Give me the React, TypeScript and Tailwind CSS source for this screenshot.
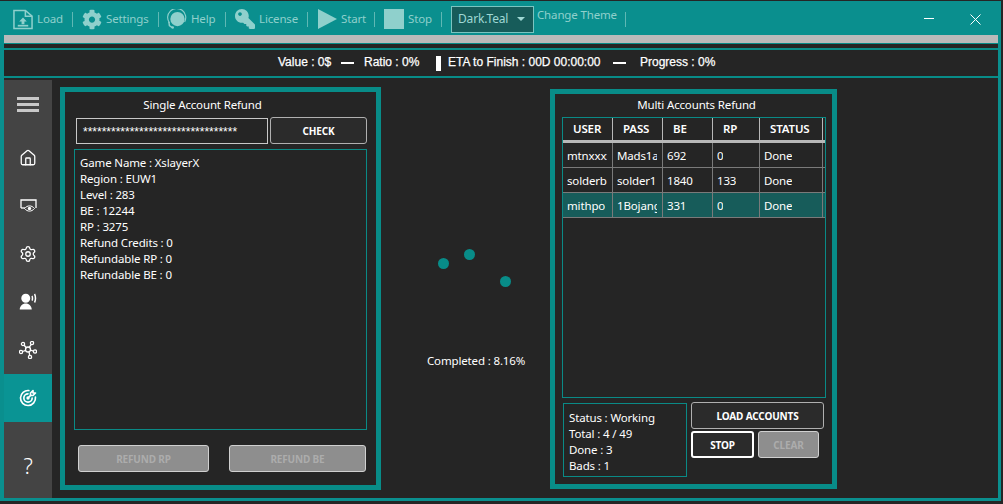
import { Home, Settings } from "lucide-react"
import { FaCog, FaKey } from "react-icons/fa"
import { RiUserVoiceFill } from "react-icons/ri"
import { TbTargetArrow } from "react-icons/tb"

const uiFont = "font-['Noto_Sans','Open_Sans',sans-serif] tracking-[-0.15px]"

const LoadIcon = () => (
  <svg width="21" height="21" viewBox="0 0 21 21" fill="none" stroke="#8fd0cc" strokeWidth="1.6">
    <path d="M1 1h12l7 6v13H1z" />
    <path d="M13 1v6h7" />
    <path d="M10.5 8.5l4 4h-2.500v3h-3v-3h-2.500z" fill="#8fd0cc" stroke="none" />
    <path d="M5 17h11" strokeWidth="1.800" />
  </svg>
)

const HelpIcon = () => (
  <svg width="21" height="21" viewBox="0 0 21 21" fill="none">
    <circle cx="11" cy="10" r="7.500" fill="#8fd0cc" />
    <path d="M2.500 14a9.500 9.500 0 1 1 16 -1" stroke="#8fd0cc" strokeWidth="1.200" />
    <path d="M2 13l.5 4 3 2" stroke="#8fd0cc" strokeWidth="1.500" />
    <circle cx="6" cy="19" r="1.300" fill="#8fd0cc" />
  </svg>
)

const ToolItem = ({ icon, label, width }: { icon: React.ReactNode; label: string; width: number }) => (
  <div className="flex items-center h-full shrink-0" style={{ width }}>
    <div className="w-5 h-5 flex items-center justify-center shrink-0">{icon}</div>
    <span className="ml-1 text-[11.5px] text-[#8fd0cc]">{label}</span>
    <div className="ml-auto w-px h-[15px] bg-[#5fb8b4]" />
  </div>
)

const Toolbar = () => (
  <div className={`${uiFont} h-[34px] flex items-center pt-[2px] pl-[9px] pr-[17px] shrink-0`}>
    <ToolItem icon={<LoadIcon />} label="Load" width={60} />
    <div className="w-[9px]" />
    <ToolItem icon={<FaCog size={21} color="#8fd0cc" />} label="Settings" width={77} />
    <div className="w-[8px]" />
    <ToolItem icon={<HelpIcon />} label="Help" width={59} />
    <div className="w-[9px]" />
    <ToolItem icon={<FaKey size={20} color="#8fd0cc" className="-scale-x-100" />} label="License" width={73} />
    <div className="w-[9px]" />
    <ToolItem
      icon={
        <svg width="20" height="20" viewBox="0 0 20 20">
          <path d="M1 0l19 10L1 20z" fill="#8fd0cc" />
        </svg>
      }
      label="Start"
      width={58}
    />
    <div className="w-[9px]" />
    <ToolItem icon={<div className="w-5 h-5 bg-[#8fd0cc]" />} label="Stop" width={58} />
    <div className="w-[9px]" />
    <div className="w-[83px] h-[27px] bg-[#175c5a] border border-[#7cc4c0] flex items-center pl-[6px] text-[12px] text-[#9fd8d4] shrink-0">
      Dark.Teal
      <span className="ml-auto mr-[8px] w-0 h-0 border-x-[4px] border-x-transparent border-t-[4px] border-t-[#9fd8d4]" />
    </div>
    <span className="ml-[3px] -mt-[8px] text-[11.5px] text-[#8fd0cc] w-[80px] whitespace-nowrap">Change Theme</span>
    <div className="ml-[8px] w-px h-[15px] bg-[#5fb8b4]" />
    <div className="ml-auto w-[10px] h-px bg-white mr-[36px] -mt-px" />
    <svg width="11" height="11" viewBox="0 0 11 11" stroke="#fff" strokeWidth="1">
      <path d="M0.500 0.500l10 10M10.500 0.500l-10 10" />
    </svg>
  </div>
)

const Dash = () => <div className="w-[13px] h-[2px] bg-white" />

const StatsBar = () => (
  <div className="h-[26px] bg-[#252525] flex items-center pl-[274px] pb-[2px] text-[12px] whitespace-nowrap text-white [-webkit-text-stroke:0.25px_white] tracking-normal font-['Liberation_Sans',sans-serif] shrink-0">
    <span className="w-[53px]">Value : 0$</span>
    <div className="ml-[10px] mt-[2px]"><Dash /></div>
    <span className="ml-[10px] w-[54px]">Ratio : 0%</span>
    <div className="ml-[18px] mt-[2px] w-[5px] h-[15px] bg-white" />
    <span className="ml-[7px] w-[152px]">ETA to Finish : 00D 00:00:00</span>
    <div className="ml-[13px] mt-[2px]"><Dash /></div>
    <span className="ml-[14px]">Progress : 0%</span>
  </div>
)

const MonitorEye = () => (
  <svg width="17" height="14" viewBox="0 0 17 14" fill="none" stroke="#fff">
    <path d="M1 9V1h15v8" strokeWidth="1.300" />
    <path d="M1 9h4" strokeWidth="1.300" />
    <path d="M4.500 9.500c3-3.500 7-3.500 10 0c-3 3.500-7 3.500-10 0z" strokeWidth="1" fill="#444" />
    <circle cx="9.500" cy="9.500" r="1.700" fill="#fff" stroke="none" />
  </svg>
)

const NetworkIcon = () => (
  <svg width="18" height="18" viewBox="0 0 18 18" fill="none" stroke="#fff" strokeWidth="1.300">
    <circle cx="9" cy="8.500" r="2.500" />
    <circle cx="4" cy="3" r="1.600" />
    <circle cx="13" cy="2" r="1.600" />
    <circle cx="2" cy="11" r="1.600" />
    <circle cx="16" cy="10.500" r="1.600" />
    <circle cx="11" cy="16" r="1.600" />
    <path d="M5 4l2.500 3M12.300 3.300l-2.300 3.300M3.400 10.500l3.500-1.200M11.200 9l3.300 1.100M10 10.700l.7 3.800" />
  </svg>
)

const SideItem = ({ children, active }: { children: React.ReactNode; active?: boolean }) => (
  <div className={`h-12 flex items-center justify-center ${active ? "bg-[#0a9494]" : ""}`}>{children}</div>
)

const Sidebar = () => (
  <div className="w-12 mt-[2px] bg-[#444444] flex flex-col shrink-0">
    <SideItem>
      <div className="w-[22px] flex flex-col gap-[3px]">
        <div className="h-[3px] bg-[#c8c8c8]" />
        <div className="h-[3px] bg-[#c8c8c8]" />
        <div className="h-[3px] bg-[#c8c8c8]" />
      </div>
    </SideItem>
    <div className="h-[6px]" />
    <SideItem><Home size={18} color="#fff" strokeWidth={1.700} /></SideItem>
    <SideItem><MonitorEye /></SideItem>
    <SideItem><Settings size={18} color="#fff" strokeWidth={1.700} /></SideItem>
    <SideItem><RiUserVoiceFill size={18} color="#fff" /></SideItem>
    <SideItem><NetworkIcon /></SideItem>
    <SideItem active><TbTargetArrow size={20} color="#fff" /></SideItem>
    <div className="mt-auto mb-[9px]">
      <SideItem><span className="text-[22px] font-light text-white">?</span></SideItem>
    </div>
  </div>
)

const info = [
  "Game Name : XslayerX",
  "Region : EUW1",
  "Level : 283",
  "BE : 12244",
  "RP : 3275",
  "Refund Credits : 0",
  "Refundable RP : 0",
  "Refundable BE : 0",
]

const rows = [
  ["mtnxxxx", "Mads1a", "692", "0", "Done"],
  ["solderb", "solder1", "1840", "133", "Done"],
  ["mithpo", "1Bojang", "331", "0", "Done"],
]

const cols = ["w-[50px]", "w-[50px]", "w-[50px]", "w-[47px]", "w-[63px]"]

const DisabledBtn = ({ label, className }: { label: string; className: string }) => (
  <button className={`h-[27px] pt-px rounded-[3px] border border-[#d0d0d0] bg-[#8e8e8e] text-[10px] font-bold text-[#acacac] ${className}`}>
    {label}
  </button>
)

const OutlineBtn = ({ label, className }: { label: string; className: string }) => (
  <button className={`h-[27px] pt-px rounded-[3px] bg-[#2b2b2b] text-[10px] font-bold text-white ${className}`}>{label}</button>
)

const SinglePanel = () => (
  <div className="ml-2 mt-[9px] w-[321px] h-[403px] border-[5px] border-[#088c88] flex flex-col pl-[9px] shrink-0">
    <div className="text-center text-[11.5px] text-white w-[257px] h-[25px] pt-[4px]">Single Account Refund</div>
    <div className="flex gap-[2px] pl-[2px] h-[27px]">
      <div className="w-[192px] h-[26px] mt-px border border-[#c8c8c8] flex items-center pl-[6px] pt-[2px] text-[12px] text-white leading-none tracking-normal overflow-hidden font-['Liberation_Sans',sans-serif]">
        {"*".repeat(33)}
      </div>
      <OutlineBtn label="CHECK" className="w-[97px] border border-[#b0b0b0]" />
    </div>
    <div className="mt-[5px] w-[293px] h-[281px] border border-[#0a8a86] px-[5px] pt-[5px] text-[11.5px] leading-4 text-white">
      {info.map((line) => (
        <div key={line}>{line}</div>
      ))}
    </div>
    <div className="flex mt-[15px] pl-[4px]">
      <DisabledBtn label="REFUND RP" className="w-[131px]" />
      <DisabledBtn label="REFUND BE" className="ml-[20px] w-[137px]" />
    </div>
  </div>
)

const Spinner = () => (
  <div className="relative flex-1 h-full">
    <div className="absolute left-[57px] top-[180px] w-[11px] h-[11px] rounded-full bg-[#088c88]" />
    <div className="absolute left-[83px] top-[171px] w-[11px] h-[11px] rounded-full bg-[#088c88]" />
    <div className="absolute left-[119px] top-[198px] w-[11px] h-[11px] rounded-full bg-[#088c88]" />
    <div className="absolute left-[46px] top-[274px] text-[11.5px] text-white whitespace-nowrap">Completed : 8.16%</div>
  </div>
)

const MultiPanel = () => (
  <div className="mt-[11px] w-[287px] h-[400px] border-[5px] border-[#088c88] flex flex-col pl-[7px] shrink-0">
    <div className="text-center text-[11.5px] text-white w-[269px] h-[23px] pt-[2px]">Multi Accounts Refund</div>
    <div className="w-[264px] h-[281px] border border-[#0a8a86] flex flex-col">
      <div className="flex h-[22px] shrink-0">
        {["USER", "PASS", "BE", "RP", "STATUS"].map((h, i) => (
          <div key={h} className={`${cols[i]} border-r border-[#b8b8b8] pl-[10px] flex items-center text-[11.5px] font-semibold text-white`}>
            {h}
          </div>
        ))}
      </div>
      <div className="h-[3px] w-[262px] bg-[#b8b8b8] shrink-0" />
      {rows.map((row, r) => (
        <div key={row[0]} className={`flex h-[25px] w-[262px] border-b border-[#7a7a7a] shrink-0 ${r === 2 ? "bg-[#175c5a]" : ""}`}>
          {row.map((cell, i) => (
            <div key={cell + i} className={`${cols[i]} border-r border-[#7a7a7a] pl-[4px] pt-[2px] flex items-center text-[11.5px] text-white`}>
              <span className="block max-w-[40px] overflow-hidden whitespace-nowrap">{cell}</span>
            </div>
          ))}
        </div>
      ))}
    </div>
    <div className="flex mt-[4px]">
      <div className="ml-px w-[124px] h-[74px] mt-px border border-[#0a8a86] pl-[5px] pt-[6px] text-[11.5px] leading-4 text-white">
        <div>Status : Working</div>
        <div>Total : 4 / 49</div>
        <div>Done : 3</div>
        <div>Bads : 1</div>
      </div>
      <div className="ml-[4px] flex flex-col gap-[2px]">
        <OutlineBtn label="LOAD ACCOUNTS" className="w-[133px] border border-[#b0b0b0]" />
        <div className="flex gap-[4px]">
          <OutlineBtn label="STOP" className="w-[63px] border-2 border-white" />
          <DisabledBtn label="CLEAR" className="w-[61px]" />
        </div>
      </div>
    </div>
  </div>
)

export default function App() {
  return (
    <div className={`${uiFont} w-[1003px] h-[504px] bg-[#252525] overflow-hidden pt-px`}>
      <div className="w-[1001px] h-[500px] bg-[#0a8f8e] flex flex-col pl-[4px] pr-[3px] pb-[3px]">
        <Toolbar />
        <div className="h-[8px] bg-[#bababa] shrink-0" />
        <div className="h-px bg-[#088c88] shrink-0" />
        <div className="h-[4px] bg-[#252525] shrink-0" />
        <div className="h-[2px] bg-[#088c88] shrink-0" />
        <StatsBar />
        <div className="h-[2px] bg-[#088c88] shrink-0" />
        <div className="flex-1 min-h-0 bg-[#252525] flex">
          <Sidebar />
          <SinglePanel />
          <Spinner />
          <MultiPanel />
          <div className="w-[161px] shrink-0" />
        </div>
      </div>
    </div>
  )
}
